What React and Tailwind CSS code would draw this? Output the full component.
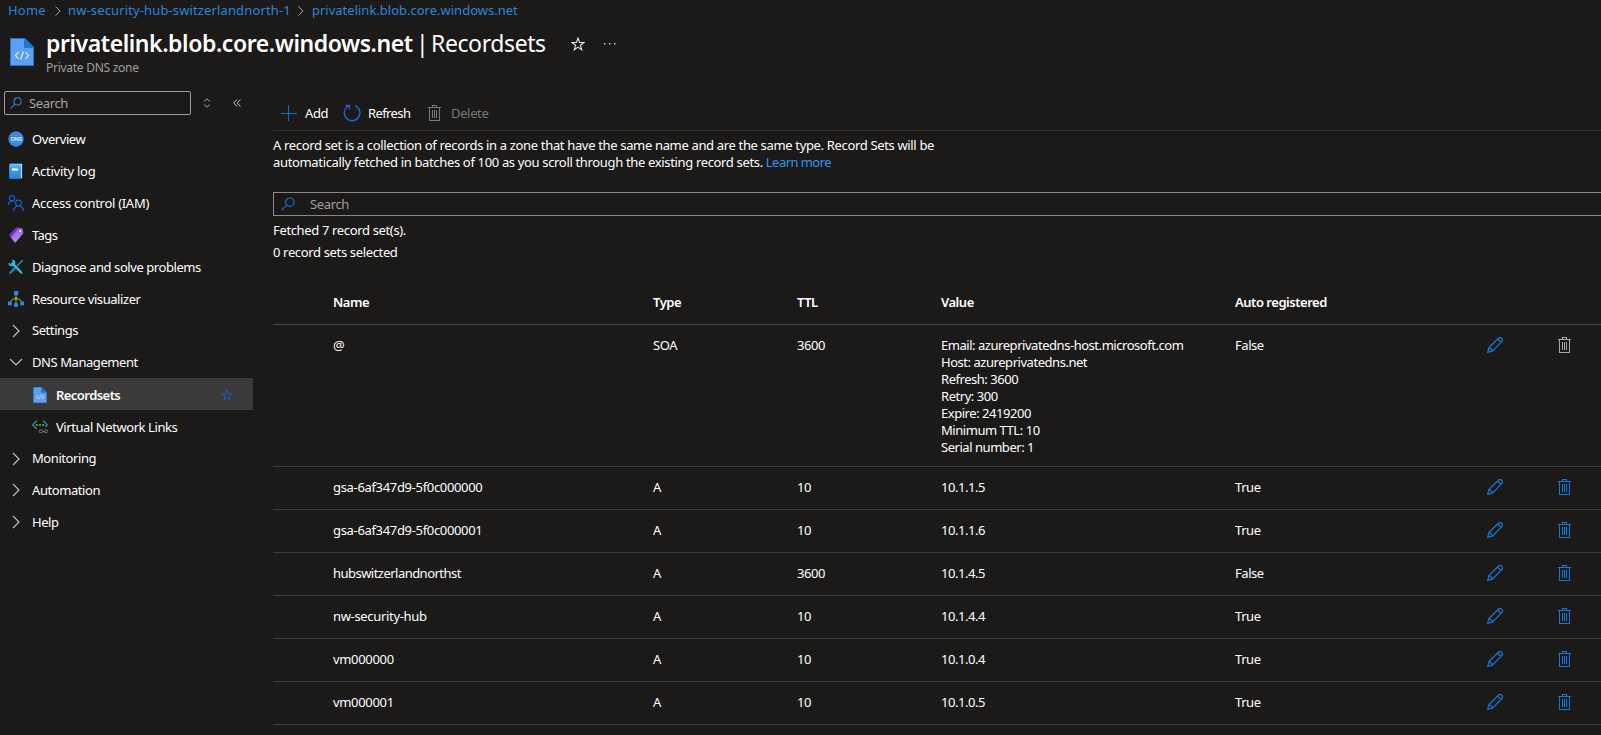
const ROWS = [
  { name: '@', type: 'SOA', ttl: '3600', value: ['Email: azureprivatedns-host.microsoft.com', 'Host: azureprivatedns.net', 'Refresh: 3600', 'Retry: 300', 'Expire: 2419200', 'Minimum TTL: 10', 'Serial number: 1'], auto: 'False', locked: true },
  { name: 'gsa-6af347d9-5f0c000000', type: 'A', ttl: '10', value: ['10.1.1.5'], auto: 'True' },
  { name: 'gsa-6af347d9-5f0c000001', type: 'A', ttl: '10', value: ['10.1.1.6'], auto: 'True' },
  { name: 'hubswitzerlandnorthst', type: 'A', ttl: '3600', value: ['10.1.4.5'], auto: 'False', tight: true },
  { name: 'nw-security-hub', type: 'A', ttl: '10', value: ['10.1.4.4'], auto: 'True' },
  { name: 'vm000000', type: 'A', ttl: '10', value: ['10.1.0.4'], auto: 'True' },
  { name: 'vm000001', type: 'A', ttl: '10', value: ['10.1.0.5'], auto: 'True' },
];

function FileIcon({ className }) {
  return (
    <svg viewBox="0 0 24 28" className={className}>
      <path d="M1 0h14l9 9v18a1 1 0 0 1-1 1H1a1 1 0 0 1-1-1V1a1 1 0 0 1 1-1z" fill="#1b78d4" />
      <path d="M1 1h13v8a1 1 0 0 0 1 1h8v17H1z" fill="#5ea0ef" />
      <path d="M8.500 14l-3 3.500l3 3.500M15.500 14l3 3.500l-3 3.500M13.300 13.500l-2.600 8" fill="none" stroke="#f2f6fc" strokeWidth="1.100" />
    </svg>
  );
}

function Trash({ className }) {
  return (
    <svg viewBox="0 0 13 16" width="13" height="16" className={className} fill="none" stroke="currentColor" shapeRendering="crispEdges">
      <path d="M0 2.500h13M4.500 2.500v-2h4v2M1.500 2.500v13h10v-13M4.500 5v8M6.500 5v8M8.500 5v8" />
    </svg>
  );
}

function Pencil() {
  return (
    <svg viewBox="0 0 16 16" width="16" height="16" className="text-[#1477dc]" fill="none" stroke="currentColor" strokeWidth="1.200">
      <path d="M0.700 15.300l1.200-4.700L11.600 1a1.900 1.900 0 0 1 2.700 0l0.700 0.700a1.900 1.900 0 0 1 0 2.700L5.400 14.100zM10.500 2l3.500 3.500M1.900 10.600c1.600 0 2 0.700 2 1.500c0.800 0 1.500 0.500 1.500 2" />
    </svg>
  );
}

function Star({ className }) {
  return (
    <svg viewBox="0 0 14 14" className={className} fill="none" stroke="currentColor" strokeWidth="1.100">
      <path d="M7 1l1.500 4.500h4.700l-3.800 2.800l1.400 4.600L7 10.100l-3.800 2.800l1.400-4.600L0.800 5.500h4.700z" />
    </svg>
  );
}

function Magnifier({ className }) {
  return (
    <svg viewBox="0 0 14 14" className={className} fill="none" stroke="currentColor" strokeWidth="1.200">
      <circle cx="8.800" cy="5.200" r="4.200" />
      <path d="M5.800 8.200L0.600 13.400" />
    </svg>
  );
}

function Chevron({ down }) {
  return (
    <svg viewBox="0 0 16 16" width="16" height="16" fill="none" stroke="#c8c6c4" strokeWidth="1.100">
      <path d={down ? 'M2 5l6 6l6-6' : 'M5 2l6 6l-6 6'} />
    </svg>
  );
}

function Crumb() {
  return (
    <svg viewBox="0 0 6 10" width="6" height="10" fill="none" stroke="#a19f9d" strokeWidth="1">
      <path d="M0.500 0.500L5 5l-4.500 4.500" />
    </svg>
  );
}

const ICONS = {
  dns: (
    <svg viewBox="0 0 16 16" width="16" height="16">
      <circle cx="8" cy="8" r="7.700" fill="#2f86dd" />
      <path d="M2 4.500h12M2 11.500h12M8 0.500v4M8 11.500v4" stroke="#4b9aea" strokeWidth="0.800" />
      <text x="8.200" y="10.200" textAnchor="middle" fontSize="5.800" fontWeight="700" fill="#d9ecff" fontFamily="Liberation Sans, sans-serif">DNS</text>
    </svg>
  ),
  log: (
    <svg viewBox="0 0 16 16" width="16" height="16">
      <defs><linearGradient id="lg" x1="0" y1="0" x2="0" y2="1"><stop offset="0" stopColor="#59b4f0" /><stop offset="1" stopColor="#2383d8" /></linearGradient></defs>
      <rect x="1.300" y="0.300" width="13" height="15.400" rx="1" fill="#2078cc" />
      <rect x="2.500" y="1" width="11.300" height="14" fill="#e8f4fd" />
      <rect x="1.300" y="1.300" width="11.700" height="14.400" rx="0.800" fill="url(#lg)" />
      <rect x="4" y="5.500" width="6" height="2" fill="#fff" />
    </svg>
  ),
  iam: (
    <svg viewBox="0 0 16 16" width="16" height="16" fill="none" stroke="#1660cf" strokeWidth="1.200">
      <circle cx="4" cy="3.300" r="2.600" />
      <path d="M0.500 10V9.500a3.600 3.600 0 0 1 6-2.800" />
      <circle cx="10.500" cy="8" r="2.900" />
      <path d="M5.500 16a5 5 0 0 1 10 0" />
    </svg>
  ),
  tag: (
    <svg viewBox="0 0 16 16" width="16" height="16">
      <defs><linearGradient id="tg" x1="0" y1="0" x2="0" y2="1"><stop offset="0" stopColor="#9a62e2" /><stop offset="1" stopColor="#b08ae8" /></linearGradient></defs>
      <path d="M8 0.600h4L5 12.500L1.300 8.800a0.900 0.900 0 0 1 0-1.300z" fill="#6d2fc8" />
      <path d="M10.500 1.500l3-0.500a0.900 0.900 0 0 1 1 0.600l0.800 4.200a1 1 0 0 1-0.300 0.900L7.800 15.300a0.800 0.800 0 0 1-1.200 0L3.300 11a0.900 0.900 0 0 1 0-1.200z" fill="url(#tg)" />
      <circle cx="12.200" cy="4" r="1" fill="#fff" />
    </svg>
  ),
  tools: (
    <svg viewBox="0 0 16 16" width="16" height="16" fill="none">
      <path d="M14.600 1.200L8.300 7.700" stroke="#2a8cae" strokeWidth="1.500" />
      <path d="M7.200 8.900L2.400 13.700" stroke="#1f7fb8" strokeWidth="2.600" strokeLinecap="round" />
      <path d="M4.300 4.300l9 9.300" stroke="#35c1e8" strokeWidth="2.200" strokeLinecap="round" />
      <path d="M4.300 1.300A2.600 2.600 0 1 1 1.200 4.200" stroke="#35c1e8" strokeWidth="1.700" />
    </svg>
  ),
  graph: (
    <svg viewBox="0 0 16 16" width="16" height="16">
      <path d="M8 4v9M2 12c1-3 3-4.500 6-4.500s5 1.500 6 4.500" fill="none" stroke="#76a043" strokeWidth="1.100" />
      <circle cx="8" cy="7.500" r="1.500" fill="#86b440" />
      <rect x="6" y="0" width="4.200" height="4.200" fill="#2f86e0" />
      <rect x="0" y="10.500" width="3.800" height="3.800" fill="#2f86e0" />
      <rect x="6.100" y="12.200" width="3.800" height="3.800" fill="#2f86e0" />
      <rect x="12.200" y="10.500" width="3.800" height="3.800" fill="#2f86e0" />
    </svg>
  ),
  link: (
    <svg viewBox="0 0 16 16" width="16" height="16" fill="none">
      <path d="M4.800 1.500L0.800 5.800l4 4.200M11.200 1.500l4 4.300l-1.800 2" stroke="#2b8cb4" strokeWidth="1.300" />
      <circle cx="4.900" cy="6" r="1.100" fill="#6fb02d" /><circle cx="8" cy="6" r="1.100" fill="#6fb02d" /><circle cx="11.100" cy="6" r="1.100" fill="#6fb02d" />
      <path d="M10.500 11H8.300a1.200 1.200 0 0 0 0 2.600h2.200M12.500 11h2a1.200 1.200 0 0 1 0 2.600h-2M10 12.300h3.500" stroke="#777" strokeWidth="1" />
    </svg>
  ),
};

function MenuItem({ icon, children, className = 'h-8' }) {
  return (
    <div className={`flex items-center pl-2 gap-2 ${className}`}>
      {icon}
      <span className="whitespace-nowrap">{children}</span>
    </div>
  );
}

const COLS = 'grid grid-cols-[60px_320px_144px_144px_294px_252px_71px_1fr] w-[1328px]';

export default function App() {
  return (
    <div className="w-[1601px] h-[735px] overflow-hidden bg-[#1b1a19] text-white font-['Noto_Sans','Open_Sans',sans-serif] text-[13px] leading-[17px] tracking-[-0.35px]">
      <nav className="flex items-center h-[21px] pl-2 text-[#2788df] whitespace-nowrap">
        <span className="w-[47px] tracking-[0.2px]">Home</span>
        <Crumb />
        <span className="ml-[7px] w-[230px] tracking-[0.13px]">nw-security-hub-switzerlandnorth-1</span>
        <Crumb />
        <span className="ml-2 tracking-[0px]">privatelink.blob.core.windows.net</span>
      </nav>

      <header className="flex h-[70px] pl-2.5">
        <FileIcon className="w-6 h-7 mt-[17px]" />
        <div className="ml-3 pt-[7px] whitespace-nowrap">
          <div className="flex items-center h-[30px] text-[23px] leading-[30px]">
            <h1 className="w-[370px] font-semibold tracking-[-0.43px]">privatelink.blob.core.windows.net</h1>
            <span className="w-[15px]">|</span>
            <span className="w-[140px] tracking-[-0.4px]">Recordsets</span>
            <Star className="w-[14px] h-[14px] mt-0.5 text-[#e8e6e4]" />
            <svg viewBox="0 0 12 2" width="12" height="2" className="ml-[19px] mt-0.5" fill="#c8c6c4"><rect width="1.500" height="1.500" /><rect x="5" width="1.500" height="1.500" /><rect x="10" width="1.500" height="1.500" /></svg>
          </div>
          <div className="pt-0.5 text-[12px] leading-4 tracking-[-0.27px] text-[#a19f9d]">Private DNS zone</div>
        </div>
      </header>

      <div className="flex">
        <aside className="w-[253px] shrink-0">
          <div className="flex items-center h-6 pl-1">
            <div className="flex items-center w-[187px] h-6 border border-[#a19f9d] rounded-[2px] pl-[5px] gap-[7px] text-[#a8a6a4]">
              <Magnifier className="w-3 h-3 text-[#2788df]" />
              <span>Search</span>
            </div>
            <svg viewBox="0 0 8 10" width="8" height="10" className="ml-3" fill="none" stroke="#a8a6a4"><path d="M1 3.500L4 0.800l3 2.700M1 6.500l3 2.700l3-2.700" /></svg>
            <svg viewBox="0 0 8 8" width="8" height="8" className="ml-[22px]" fill="none" stroke="#c8c6c4"><path d="M4 0.500L0.700 4L4 7.500M7.500 0.500L4.200 4l3.300 3.500" /></svg>
          </div>
          <div className="pt-2 tracking-[-0.43px]">
            <MenuItem icon={ICONS.dns}>Overview</MenuItem>
            <MenuItem icon={ICONS.log}><span className="tracking-[-0.25px]">Activity log</span></MenuItem>
            <MenuItem icon={ICONS.iam}><span className="tracking-[-0.29px]">Access control (IAM)</span></MenuItem>
            <MenuItem icon={ICONS.tag}><span className="tracking-[-0.6px]">Tags</span></MenuItem>
            <MenuItem icon={ICONS.tools}>Diagnose and solve problems</MenuItem>
            <MenuItem icon={ICONS.graph}>Resource visualizer</MenuItem>
            <MenuItem icon={<Chevron />} className="h-[31px]">Settings</MenuItem>
            <MenuItem icon={<Chevron down />}>DNS Management</MenuItem>
            <div className="flex items-center h-8 pt-0.5 bg-[#3b3a39] pl-[33px] font-semibold tracking-[-0.55px]">
              <FileIcon className="w-[14px] h-4" />
              <span className="ml-[9px] w-[165px]">Recordsets</span>
              <Star className="w-3 h-3 text-[#1660cf]" />
            </div>
            <div className="mt-px flex items-center h-8 pl-8 gap-2">{ICONS.link}<span>Virtual Network Links</span></div>
            <MenuItem icon={<Chevron />} className="h-[31px]">Monitoring</MenuItem>
            <MenuItem icon={<Chevron />}>Automation</MenuItem>
            <MenuItem icon={<Chevron />}>Help</MenuItem>
          </div>
        </aside>

        <main className="ml-5 w-[1328px] shrink-0">
          <div className="flex items-center h-10 pt-[5px] border-b border-[#323130] pl-2">
            <svg viewBox="0 0 16 16" width="16" height="16" stroke="#1968d2"><path d="M7.500 0v16M0 8.500h16" strokeWidth="1" /></svg>
            <span className="ml-2 w-[38px]">Add</span>
            <svg viewBox="0 0 18 18" width="18" height="18" fill="none" stroke="#1968d2" strokeWidth="1.400"><path d="M12 1.700a7.800 7.800 0 1 1-6.500 0.300M2.500 1.500h4v4" /></svg>
            <span className="ml-[7px] w-[60px] tracking-[-0.6px]">Refresh</span>
            <Trash className="text-[#797775]" />
            <span className="ml-[10px] text-[#797775]">Delete</span>
          </div>
          <p className="pt-[6px] whitespace-nowrap tracking-[-0.34px]">
            A record set is a collection of records in a zone that have the same name and are the same type. Record Sets will be<br />
            automatically fetched in batches of 100 as you scroll through the existing record sets. <a className="text-[#2899f5] tracking-[-0.55px]">Learn more</a>
          </p>
          <div className="mt-[21px] flex items-center h-6 border border-r-0 border-[#8a8886] pl-[7px] gap-[15px] text-[#a19f9d]">
            <Magnifier className="w-[14px] h-[14px] text-[#1968d2]" />
            <span>Search</span>
          </div>
          <div className="mt-[6px]">Fetched 7 record set(s).</div>
          <div className="mt-[5px]">0 record sets selected</div>

          <div className={`${COLS} mt-[20px] h-[44px] items-center border-b border-[#484644] font-semibold tracking-[-0.47px]`}>
            <span /><span>Name</span><span>Type</span><span>TTL</span><span>Value</span><span>Auto registered</span>
          </div>
          {ROWS.map((r) => (
            <div key={r.name} className={`${COLS} pt-[12px] items-start border-b border-[#3b3a39] ${r.value.length > 1 ? 'pb-[10px]' : 'pb-[13px]'}`}>
              <span />
              <span className={r.tight ? 'tracking-[-0.53px]' : 'tracking-[-0.33px]'}>{r.name}</span>
              <span>{r.type}</span>
              <span className="tracking-[-0.4px]">{r.ttl}</span>
              <span className="whitespace-nowrap tracking-[-0.46px]">{r.value.map((v) => <span key={v} className="block">{v}</span>)}</span>
              <span className="tracking-[-0.45px]">{r.auto}</span>
              <Pencil />
              <Trash className={r.locked ? 'text-[#a8a6a4]' : 'text-[#1477dc]'} />
            </div>
          ))}
        </main>
      </div>
    </div>
  );
}
